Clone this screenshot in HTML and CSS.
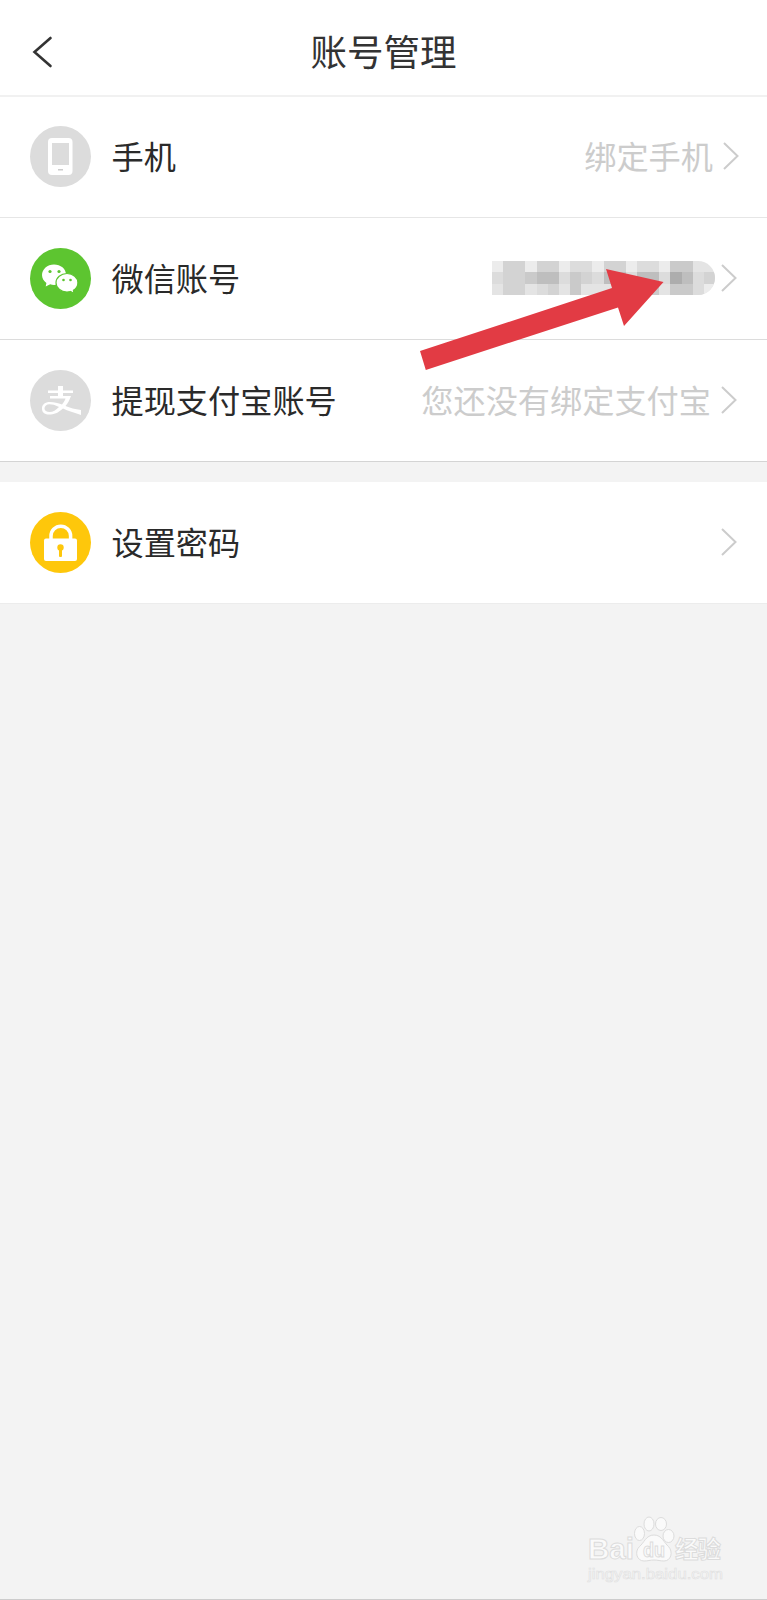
FILE: index.html
```
<!DOCTYPE html>
<html lang="zh-CN">
<head>
    <meta charset="UTF-8">
    <meta name="viewport" content="width=device-width, initial-scale=1.0">
    <title>账号管理</title>
    <link rel="stylesheet" href="styles.css">
</head>
<body>
    <header>
        <svg class="back" viewBox="0 0 22 34"><path d="M19.500 3 L3.500 17 L19.500 31"/></svg>
        <h1>账号管理</h1>
    </header>
    <main>
        <div class="row light">
            <svg class="icon" viewBox="0 0 61 61">
                <circle cx="30.5" cy="30.5" r="30.5" fill="#dcdcdc"/>
                <rect x="18" y="12" width="24.500" height="37" rx="4" fill="#fff"/>
                <rect x="22" y="17" width="17" height="22" fill="#dcdcdc"/>
                <rect x="28" y="43" width="5" height="1.500" fill="#ccc"/>
            </svg>
            <span class="label">手机</span>
            <span class="value">绑定手机</span>
            <svg class="next" viewBox="0 0 16 28"><path d="M1 1 L14.500 14 L1 27"/></svg>
        </div>
        <div class="row">
            <svg class="icon" viewBox="0 0 61 61">
                <circle cx="30.5" cy="30.5" r="30.5" fill="#5dc530"/>
                <path d="M24 16.500c-6.600 0-12 4.700-12 10.500 0 3.200 1.700 6 4.400 8l-.7 3.500 4.500-2.200c1.200.4 2.500.7 3.800.7 6.600 0 12-4.700 12-10.500s-5.400-10-12-10z" fill="#fff"/>
                <path d="M37 25.500c-6.200 0-11 4.100-11 9.200s4.800 9.300 11 9.300c1.200 0 2.400-.2 3.500-.5l3.500 2-.6-3.200c2.800-1.700 4.500-4.500 4.500-7.600 0-5.100-4.800-9.200-10.900-9.200z" fill="#fff" stroke="#5dc530" stroke-width="1.200"/>
                <circle cx="20" cy="23.500" r="1.600" fill="#5dc530"/>
                <circle cx="29" cy="23.500" r="1.600" fill="#5dc530"/>
                <circle cx="33.500" cy="32" r="1.300" fill="#5dc530"/>
                <circle cx="40.500" cy="32" r="1.300" fill="#5dc530"/>
            </svg>
            <span class="label">微信账号</span>
            <!-- hidden account name, 20 x 3 cells -->
            <svg class="mosaic" viewBox="0 0 20 3" preserveAspectRatio="none" shape-rendering="crispEdges">
                <rect width="20" height="3" fill="#e4e4e4"/>
                <path fill="#ececec" d="M0 0h1v1h-1zM3 0h1v1h-1zM6 0h1v1h-1zM9 0h1v1h-1zM12 0h1v1h-1zM15 0h1v1h-1zM19 2h1v1h-1z"/>
                <path fill="#dcdcdc" d="M0 1h1v1h-1zM6 1h1v1h-1zM9 1h1v1h-1zM12 1h1v1h-1zM15 1h1v1h-1zM7 0h2v1h-2zM13 0h2v1h-2zM4 2h1v1h-1zM18 1h1v2h-1z"/>
                <path fill="#d3d3d3" d="M1 0h2v3h-2zM4 0h2v1h-2zM8 1h1v1h-1zM5 2h1v1h-1zM19 1h1v1h-1zM10 0h2v1h-2z"/>
                <path fill="#cacaca" d="M3 1h1v1h-1zM7 1h1v2h-1zM16 0h2v1h-2zM16 2h2v1h-2zM14 2h1v1h-1z"/>
                <path fill="#bebebe" d="M4 1h2v1h-2zM10 1h2v1h-2zM13 1h2v1h-2zM17 1h1v1h-1z"/>
                <path fill="#adadad" d="M16 1h1v1h-1z"/>
            </svg>
            <svg class="next" viewBox="0 0 16 28"><path d="M1 1 L14.500 14 L1 27"/></svg>
            <svg class="arrow" viewBox="0 0 244 102">
                <path d="M0 82 L192 19 L186 0 L243.500 13 L204 57 L198 38.500 L5.800 101 Z" fill="#e23b44"/>
            </svg>
        </div>
        <div class="row end">
            <svg class="icon" viewBox="0 0 61 61">
                <circle cx="30.5" cy="30.5" r="30.5" fill="#dcdcdc"/>
                <path d="M18 20.500H28V16H33V20.500H43V23H33V26H41C39.500 30 38 33 35.500 36C40 38 45 39 51 40V45C44 42.500 38 41 33 38.500C28 43 24 44.500 19 44.500C14 44.500 12 42 12 38.500C12 34.500 15 32 20 32C24 32 28 33 32 34.500C33.500 32.500 35 30.500 35.500 28.500H20V26H28V23H18Z" fill="#fff"/>
                <path d="M29 37C25 35 22 34.300 19.500 34.300C16.500 34.300 14.500 36 14.500 38.300C14.500 41 16.500 42 19.500 42C23 42 26 40 29 37Z" fill="#dcdcdc"/>
            </svg>
            <span class="label">提现支付宝账号</span>
            <span class="value">您还没有绑定支付宝</span>
            <svg class="next" viewBox="0 0 16 28"><path d="M1 1 L14.500 14 L1 27"/></svg>
        </div>
        <div class="row password">
            <svg class="icon" viewBox="0 0 61 61">
                <circle cx="30.5" cy="30.5" r="30.5" fill="#fec70b"/>
                <path d="M21 28v-4a9.800 9.800 0 0 1 19.600 0v4" fill="none" stroke="#fff" stroke-width="3.500"/>
                <rect x="14" y="26.500" width="33" height="22.500" rx="2" fill="#fff"/>
                <circle cx="30.5" cy="35.500" r="3.200" fill="#fec70b"/>
                <rect x="29" y="36" width="3" height="9" rx="1" fill="#fec70b"/>
            </svg>
            <span class="label">设置密码</span>
            <svg class="next" viewBox="0 0 16 28"><path d="M1 1 L14.500 14 L1 27"/></svg>
        </div>
    </main>
    <svg class="watermark" viewBox="0 0 142 72">
        <g class="brand">
            <text x="4" y="46" font-size="30" textLength="46" lengthAdjust="spacingAndGlyphs">Bai</text>
            <ellipse cx="55.500" cy="20.500" rx="5" ry="7"/>
            <ellipse cx="65" cy="11" rx="5" ry="7"/>
            <ellipse cx="77" cy="11" rx="5.500" ry="6.500"/>
            <ellipse cx="84.500" cy="23" rx="5.500" ry="6.500"/>
            <path d="M70 22c-8 0-10 8-14.500 11.500C50 39 53 48 60 48c4 0 6-1 10-1s6 1 10 1c7 0 9.500-9 4.500-14.500C80 30 78 22 70 22z"/>
            <text x="59" y="43.500" font-size="20" textLength="22" lengthAdjust="spacingAndGlyphs">du</text>
            <text x="91" y="45" font-size="23.500" textLength="46">经验</text>
        </g>
        <text class="url" x="4" y="65.500" font-size="14.500" textLength="135" lengthAdjust="spacingAndGlyphs">jingyan.baidu.com</text>
    </svg>
</body>
</html>
```

FILE: styles.css
```
body {
    font-family: "Noto Sans CJK SC", sans-serif;
    margin: 0;
    padding: 0;
    background-color: #f3f3f3;
    box-sizing: border-box;
    min-height: 1600px;
    border-bottom: 1px solid #ccc;
    position: relative;
}
header {
    display: grid;
    grid-template-columns: 60px 1fr 60px;
    align-items: center;
    box-sizing: border-box;
    height: 97px;
    padding-top: 9px;
    background-color: #fff;
    border-bottom: 2px solid #f1f1f1;
}
h1 {
    margin: 0;
    padding-bottom: 2px;
    font-size: 36.5px;
    font-weight: normal;
    line-height: 50px;
    text-align: center;
    color: #333;
}
.back {
    width: 22px;
    height: 34px;
    margin-left: 31px;
    fill: none;
    stroke: #333;
    stroke-width: 2.6;
    stroke-linecap: round;
}
.row {
    display: flex;
    align-items: center;
    position: relative;
    box-sizing: border-box;
    height: 122px;
    padding: 0 30px;
    background-color: #fff;
    border-bottom: 1px solid #dcdcdc;
}
.row.light {
    height: 121px;
    padding-right: 28px;
    padding-bottom: 1px;
    border-bottom-color: #e6e6e6;
}
.row.end {
    border-bottom-color: #d4d4d4;
}
.row.password {
    margin-top: 20px;
    border-bottom-color: #ececec;
}
.icon {
    width: 61px;
    height: 61px;
    margin-right: 20.5px;
}
.label {
    padding-bottom: 3px;
    font-size: 32.2px;
    line-height: 46px;
    color: #2a2a2a;
}
.value {
    margin-left: auto;
    padding-bottom: 3px;
    font-size: 32.2px;
    line-height: 46px;
    color: #ccc;
}
.next {
    width: 16px;
    height: 28px;
    margin-left: 10px;
    margin-bottom: 1px;
    fill: none;
    stroke: #ccc;
    stroke-width: 2;
}
.label + .next {
    margin-left: auto;
}
.mosaic {
    width: 223px;
    height: 34px;
    margin-left: auto;
    margin-right: -4px;
    margin-bottom: 2px;
    border-radius: 0 17px 17px 0;
}
.arrow {
    position: absolute;
    left: 420px;
    top: 51px;
    width: 244px;
    height: 102px;
    z-index: 1;
}
.watermark {
    position: absolute;
    right: 41px;
    bottom: 14px;
    width: 142px;
    height: 72px;
    font-family: "Liberation Sans", "Noto Sans CJK SC", sans-serif;
    fill: #fafafa;
}
.brand {
    font-weight: bold;
    stroke: #dcdcdc;
    stroke-width: 1;
}
.url {
    stroke: #e0e0e0;
    stroke-width: 0.6;
}
```
